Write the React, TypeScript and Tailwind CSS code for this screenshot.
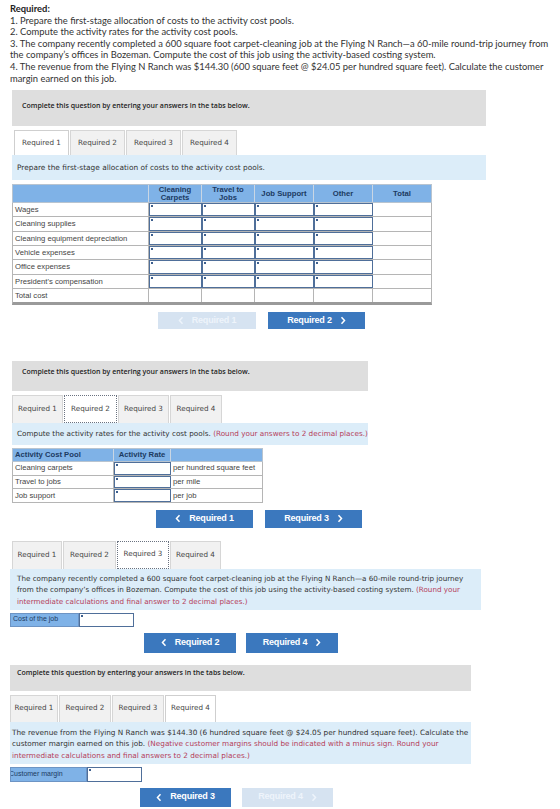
import type { ReactNode } from 'react';

const sans = { fontFamily: 'Lato, "Open Sans", sans-serif' };
const verdana = { fontFamily: '"DejaVu Sans", Verdana, sans-serif' };
const arial = { fontFamily: '"Liberation Sans", Arial, sans-serif' };
const open = { fontFamily: '"Open Sans", sans-serif' };

function Chevron({ dir }: { dir: 'left' | 'right' }) {
  return (
    <svg width="6" height="9" viewBox="0 0 6 9" className="shrink-0">
      <path
        d={dir === 'left' ? 'M4.5 1.2 L1.5 4.5 L4.5 7.8' : 'M1.5 1.2 L4.5 4.5 L1.5 7.8'}
        fill="none"
        stroke="currentColor"
        strokeWidth="1.5"
      />
    </svg>
  );
}

function NavButton({ label, dir, disabled, w, h }: { label: string; dir: 'left' | 'right'; disabled?: boolean; w: string; h: string }) {
  return (
    <div
      style={arial}
      className={`${w} ${h} flex items-center justify-center gap-[8px] text-[9px] font-bold tracking-[-0.2px] ${
        disabled ? 'bg-[#d6e3f1] text-[#eef4fb]' : 'bg-[#3b78be] text-white'
      }`}
    >
      {dir === 'left' && <Chevron dir="left" />}
      <span>{label}</span>
      {dir === 'right' && <Chevron dir="right" />}
    </div>
  );
}

function GrayBox({ className }: { className: string }) {
  return (
    <div className={`bg-[#dedede] ${className}`}>
      <p style={open} className="m-0 text-[7px] leading-[10px] font-semibold text-[#222] whitespace-nowrap">
        Complete this question by entering your answers in the tabs below.
      </p>
    </div>
  );
}

type TabStyle = 'white' | 'dotted';

function Tabs({ widths, active, mode, h, pl }: { widths: string[]; active: number; mode: TabStyle; h: string; pl: string }) {
  return (
    <div className={`flex items-end gap-[1px] ${pl}`}>
      {widths.map((w, i) => {
        const on = i === active;
        const cls = on
          ? mode === 'white'
            ? 'bg-white border border-b-0 border-[#cfcfcf]'
            : 'bg-white border border-dotted border-[#6a7280]'
          : 'bg-[#f1f1f1] border border-b-0 border-[#d6d6d6]';
        return (
          <div
            key={i}
            style={verdana}
            className={`${w} ${h} ${cls} flex items-center justify-center text-[7.2px] text-[#444] whitespace-nowrap`}
          >
            Required {i + 1}
          </div>
        );
      })}
    </div>
  );
}

function Flag() {
  return <span className="absolute left-[1px] top-[1px] w-[2px] h-[2px] bg-[#3d5f8e]" />;
}

function Input({ className }: { className: string }) {
  return (
    <div className={`relative bg-white border border-[#4f6f9a] ${className}`}>
      <Flag />
    </div>
  );
}

function Red({ children }: { children: ReactNode }) {
  return <span className="text-[#b5405a]">{children}</span>;
}

const costRows = [
  'Wages',
  'Cleaning supplies',
  'Cleaning equipment depreciation',
  'Vehicle expenses',
  'Office expenses',
  "President's compensation",
];

function AllocationTable() {
  const cols = ['w-[53px]', 'w-[53px]', 'w-[59px]', 'w-[59px]'];
  return (
    <div style={arial} className="ml-[12px] w-[420px] text-[7.7px]">
      <div className="flex h-[19px] bg-[#7fb2e7] text-[#1c3a62] font-bold leading-[8px] text-center border border-[#b8c4d0]">
        <div className="w-[136px] border-r border-[#c9d6e4]" />
        <div className="w-[53px] flex items-center justify-center border-r border-[#c9d6e4]">
          Cleaning
          <br />
          Carpets
        </div>
        <div className="w-[53px] flex items-center justify-center border-r border-[#c9d6e4]">
          Travel to
          <br />
          Jobs
        </div>
        <div className="w-[59px] flex items-center justify-center border-r border-[#c9d6e4]">Job Support</div>
        <div className="w-[59px] flex items-center justify-center border-r border-[#c9d6e4]">Other</div>
        <div className="flex-1 flex items-center justify-center">Total</div>
      </div>
      {costRows.map((r) => (
        <div key={r} className="flex h-[14.3px] border-x border-b border-[#b5b5b5] text-[#444]">
          <div className="w-[136px] pl-[2px] flex items-center border-r border-[#b5b5b5] whitespace-nowrap">{r}</div>
          {cols.map((c, i) => (
            <Input key={i} className={`${c} h-full border-[1.5px]`} />
          ))}
          <div className="flex-1" />
        </div>
      ))}
      <div className="flex h-[16px] border-x border-[#b5b5b5] border-b-[3px] border-b-[#9a9a9a] text-[#444]">
        <div className="w-[136px] pl-[2px] flex items-center border-r border-[#b5b5b5]">Total cost</div>
        {cols.map((c, i) => (
          <div key={i} className={`${c} border-r border-[#b5b5b5]`} />
        ))}
        <div className="flex-1" />
      </div>
    </div>
  );
}

const rateRows = [
  ['Cleaning carpets', 'per hundred square feet'],
  ['Travel to jobs', 'per mile'],
  ['Job support', 'per job'],
];

function RateTable() {
  return (
    <div style={arial} className="ml-[12px] w-[251px] text-[7.7px]">
      <div className="flex h-[14px] bg-[#7fb2e7] text-[#1c3a62] font-bold border border-[#b8c4d0]">
        <div className="w-[101px] pl-[2px] flex items-center border-r border-[#c9d6e4]">Activity Cost Pool</div>
        <div className="w-[57px] flex items-center justify-center border-r border-[#c9d6e4]">Activity Rate</div>
        <div className="flex-1" />
      </div>
      {rateRows.map(([a, b]) => (
        <div key={a} className="flex h-[13.6px] border-x border-b border-[#b5b5b5] text-[#444]">
          <div className="w-[101px] pl-[2px] flex items-center border-r border-[#b5b5b5]">{a}</div>
          <Input className="w-[57px] h-full border-[1.5px]" />
          <div className="flex-1 pl-[2px] flex items-center whitespace-nowrap">{b}</div>
        </div>
      ))}
    </div>
  );
}

export default function App() {
  return (
    <div className="w-[560px] h-[809px] bg-white overflow-hidden text-[#333]">
      {/* Question text */}
      <div style={sans} className="pt-[3px] pl-[10px] text-[9.4px] leading-[11.6px] text-[#333] whitespace-nowrap">
        <p className="m-0 font-bold text-[#222]">Required:</p>
        <p className="m-0">1. Prepare the first-stage allocation of costs to the activity cost pools.</p>
        <p className="m-0">2. Compute the activity rates for the activity cost pools.</p>
        <p className="m-0">
          3. The company recently completed a 600 square foot carpet-cleaning job at the Flying N Ranch—a 60-mile round-trip journey from
        </p>
        <p className="m-0">the company’s offices in Bozeman. Compute the cost of this job using the activity-based costing system.</p>
        <p className="m-0">
          4. The revenue from the Flying N Ranch was $144.30 (600 square feet @ $24.05 per hundred square feet). Calculate the customer
        </p>
        <p className="m-0">margin earned on this job.</p>
      </div>

      {/* Part 1 */}
      <GrayBox className="mt-[6px] ml-[12px] w-[474px] h-[36px] pl-[10px] pt-[11px]" />
      <div className="mt-[4px]">
        <Tabs widths={['w-[55px]', 'w-[55px]', 'w-[55px]', 'w-[55px]']} active={0} mode="white" h="h-[25px]" pl="pl-[14px]" />
      </div>
      <div style={verdana} className="ml-[12px] w-[474px] h-[25px] bg-[#dcedf9] pl-[5px] flex items-center text-[7.4px] text-[#333] whitespace-nowrap">
        Prepare the first-stage allocation of costs to the activity cost pools.
      </div>
      <div className="mt-[4px]">
        <AllocationTable />
      </div>
      <div className="mt-[7px] flex pl-[158px] gap-[12px]">
        <NavButton label="Required 1" dir="left" disabled w="w-[98px]" h="h-[17px]" />
        <NavButton label="Required 2" dir="right" w="w-[97px]" h="h-[17px]" />
      </div>

      {/* Part 2 */}
      <GrayBox className="mt-[32px] ml-[12px] w-[356px] h-[30px] pl-[10px] pt-[6px]" />
      <div className="mt-[4px]">
        <Tabs widths={['w-[51px]', 'w-[53px]', 'w-[51px]', 'w-[52px]']} active={1} mode="dotted" h="h-[28px]" pl="pl-[12px]" />
      </div>
      <div style={verdana} className="ml-[12px] w-[356px] h-[22px] bg-[#dcedf9] pl-[5px] flex items-center text-[7.25px] text-[#333] whitespace-nowrap overflow-hidden">
        <span>
          Compute the activity rates for the activity cost pools. <Red>(Round your answers to 2 decimal places.)</Red>
        </span>
      </div>
      <div className="mt-[3px]">
        <RateTable />
      </div>
      <div className="mt-[7px] flex pl-[156px] gap-[12px]">
        <NavButton label="Required 1" dir="left" w="w-[97px]" h="h-[18px]" />
        <NavButton label="Required 3" dir="right" w="w-[97px]" h="h-[18px]" />
      </div>

      {/* Part 3 */}
      <div className="mt-[13px]">
        <Tabs widths={['w-[50px]', 'w-[53px]', 'w-[52px]', 'w-[51px]']} active={2} mode="dotted" h="h-[28px]" pl="pl-[12px]" />
      </div>
      <div style={verdana} className="ml-[10px] w-[471px] h-[41px] bg-[#dcedf9] pl-[7px] pt-[4px] text-[7.2px] leading-[11.5px] text-[#333] whitespace-nowrap">
        <p className="m-0">
          The company recently completed a 600 square foot carpet-cleaning job at the Flying N Ranch—a 60-mile round-trip journey
        </p>
        <p className="m-0">
          from the company’s offices in Bozeman. Compute the cost of this job using the activity-based costing system. <Red>(Round your</Red>
        </p>
        <p className="m-0">
          <Red>intermediate calculations and final answer to 2 decimal places.)</Red>
        </p>
      </div>
      <div style={arial} className="mt-[3px] ml-[10px] flex h-[14px] text-[7px]">
        <div className="w-[69px] bg-[#7fb2e7] border border-[#6d94c4] pl-[2px] flex items-center text-[#1c3a62]">Cost of the job</div>
        <Input className="w-[55px] h-full" />
      </div>
      <div className="mt-[6px] flex pl-[144px] gap-[10px]">
        <NavButton label="Required 2" dir="left" w="w-[92px]" h="h-[20px]" />
        <NavButton label="Required 4" dir="right" w="w-[92px]" h="h-[20px]" />
      </div>

      {/* Part 4 */}
      <GrayBox className="mt-[12px] ml-[10px] w-[461px] h-[26px] pl-[7px] pt-[3px]" />
      <div className="mt-[4px]">
        <Tabs widths={['w-[48px]', 'w-[52px]', 'w-[52px]', 'w-[51px]']} active={3} mode="white" h="h-[27px]" pl="pl-[10px]" />
      </div>
      <div style={verdana} className="ml-[10px] w-[461px] h-[42px] bg-[#dcedf9] pl-[2px] pt-[5px] text-[7.3px] leading-[11.5px] text-[#333] whitespace-nowrap">
        <p className="m-0">
          The revenue from the Flying N Ranch was $144.30 (6 hundred square feet @ $24.05 per hundred square feet). Calculate the
        </p>
        <p className="m-0">
          customer margin earned on this job.{' '}
          <Red>(Negative customer margins should be indicated with a minus sign. Round your</Red>
        </p>
        <p className="m-0">
          <Red>intermediate calculations and final answers to 2 decimal places.)</Red>
        </p>
      </div>
      <div style={arial} className="mt-[3px] ml-[10px] flex h-[15px] text-[7px]">
        <div className="w-[77px] bg-[#7fb2e7] border border-[#6d94c4] flex items-center text-[#1c3a62] overflow-hidden">
          <span className="-ml-[2px] whitespace-nowrap">Customer margin</span>
        </div>
        <Input className="w-[55px] h-full" />
      </div>
      <div className="mt-[6px] flex pl-[140px] gap-[11px]">
        <NavButton label="Required 3" dir="left" w="w-[91px]" h="h-[19px]" />
        <NavButton label="Required 4" dir="right" disabled w="w-[91px]" h="h-[19px]" />
      </div>
    </div>
  );
}
